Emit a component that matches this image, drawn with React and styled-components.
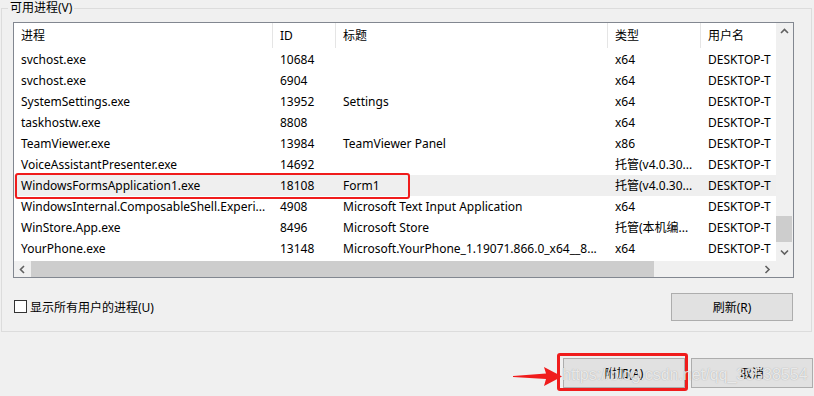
import React from "react";
import styled, { createGlobalStyle } from "styled-components";

const Global = createGlobalStyle`
  html, body { margin: 0; padding: 0; background: #f0f0f0; }
  body {
    font-family: "Noto Sans", "Noto Sans CJK SC", sans-serif;
    font-size: 12px;
    color: #000;
  }
  * { box-sizing: border-box; }
`;

const Page = styled.div`
  width: 814px;
  height: 396px;
  overflow: hidden;
  display: flex;
  flex-direction: column;
`;

const Group = styled.fieldset`
  margin: 0 2px 0 1px;
  border: 1px solid #dcdcdc;
  padding: 6px 17px 10px 11px;
  min-width: 0;
`;

const Legend = styled.legend`
  padding: 0 2px;
  margin-left: -5px;
  font-size: 12px;
  line-height: 16px;
  color: #000;
`;

const List = styled.div`
  border: 1px solid #828790;
  background: #fff;
  display: grid;
  grid-template-columns: 1fr 17px;
  grid-template-rows: 238px 16px;
  height: 256px;
`;

const Viewport = styled.div`
  overflow: hidden;
  position: relative;
`;

const cols = "259px 63px 272px 93px 120px";

const HeaderRow = styled.div`
  display: grid;
  grid-template-columns: ${cols};
  height: 26px;
  background: #fff;
`;

const HeaderCell = styled.div`
  padding-left: 7px;
  line-height: 25px;
  border-left: ${(p) => (p.$first ? "none" : "1px solid #e5e5e5")};
  margin-left: ${(p) => (p.$first ? "0" : "-1px")};
  height: 25px;
  white-space: nowrap;
`;

const Row = styled.div`
  position: relative;
  display: grid;
  grid-template-columns: ${cols};
  height: 21px;
  line-height: 21px;
  background: ${(p) => (p.$selected ? "#efefef" : "#fff")};
`;

const Cell = styled.div`
  padding-left: 7px;
  white-space: nowrap;
  overflow: hidden;
`;

const Highlight = styled.div`
  position: absolute;
  z-index: 2;
  left: 1px;
  top: -2px;
  width: 395px;
  height: 26px;
  border: 2.5px solid #f01c1c;
  border-radius: 3px;
  pointer-events: none;
`;

const VScroll = styled.div`
  background: #f0f0f0;
  display: flex;
  flex-direction: column;
  align-items: center;
  position: relative;
`;

const VThumb = styled.div`
  position: absolute;
  left: 0;
  top: 193px;
  width: 16px;
  height: 26px;
  background: #cdcdcd;
`;

const ArrowBox = styled.div`
  width: 17px;
  height: 17px;
  display: flex;
  align-items: center;
  justify-content: center;
  flex: none;
`;

const VSpacer = styled.div`
  flex: 1;
`;

const HScroll = styled.div`
  background: #f0f0f0;
  display: flex;
  align-items: center;
`;

const HThumb = styled.div`
  width: 623px;
  height: 16px;
  background: #cdcdcd;
`;

const Corner = styled.div`
  background: #f0f0f0;
`;

const OptionsRow = styled.div`
  margin-top: 15px;
  margin-right: 1px;
  display: flex;
  align-items: center;
  justify-content: space-between;
  height: 28px;
`;

const CheckLabel = styled.label`
  display: flex;
  align-items: center;
  gap: 3px;
  margin-left: 1px;
  margin-top: -1px;
`;

const Box = styled.span`
  width: 13px;
  height: 13px;
  border: 1px solid #333;
  background: #fff;
`;

const Button = styled.button`
  position: relative;
  width: 122px;
  height: ${(p) => (p.$tall ? "30px" : "28px")};
  background: #e1e1e1;
  border: 1px solid #adadad;
  font-family: "Noto Sans", "Noto Sans CJK SC", sans-serif;
  font-size: 12px;
  color: #000;
  padding: 0;
`;

const ButtonMark = styled.div`
  position: absolute;
  left: -7px;
  top: -6px;
  right: -4px;
  bottom: -4px;
  border: 3px solid #f01c1c;
  border-radius: 3px;
  pointer-events: none;
`;

const Footer = styled.div`
  position: relative;
  margin-top: 26px;
  display: flex;
  justify-content: flex-end;
  gap: 6px;
  padding-right: 1px;
`;

const Pointer = styled.svg`
  position: absolute;
  left: 513px;
  top: 9px;
`;

const Watermark = styled.div`
  position: absolute;
  left: 562px;
  top: 6px;
  font-family: "Liberation Sans", Arial, sans-serif;
  font-size: 16px;
  line-height: 22px;
  color: rgba(255, 255, 255, 0.75);
  text-shadow: 0 0 1px rgba(110, 110, 110, 0.6);
  pointer-events: none;
  white-space: nowrap;
`;

const Chevron = ({ dir }) => {
  const pts = {
    up: "1,5 4.5,1.5 8,5",
    down: "1,1.5 4.5,5 8,1.5",
    left: "5,1 1.5,4.5 5,8",
    right: "1.5,1 5,4.5 1.5,8",
  }[dir];
  const horiz = dir === "left" || dir === "right";
  return (
    <svg width={horiz ? 7 : 9} height={horiz ? 9 : 7} viewBox={horiz ? "0 0 7 9" : "0 0 9 7"}>
      <polyline points={pts} fill="none" stroke="#606060" strokeWidth="1.6" />
    </svg>
  );
};

const rows = [
  ["svchost.exe", "10684", "", "x64"],
  ["svchost.exe", "6904", "", "x64"],
  ["SystemSettings.exe", "13952", "Settings", "x64"],
  ["taskhostw.exe", "8808", "", "x64"],
  ["TeamViewer.exe", "13984", "TeamViewer Panel", "x86"],
  ["VoiceAssistantPresenter.exe", "14692", "", "托管(v4.0.30..."],
  ["WindowsFormsApplication1.exe", "18108", "Form1", "托管(v4.0.30...", true],
  ["WindowsInternal.ComposableShell.Experi...", "4908", "Microsoft Text Input Application", "x64"],
  ["WinStore.App.exe", "8496", "Microsoft Store", "托管(本机编..."],
  ["YourPhone.exe", "13148", "Microsoft.YourPhone_1.19071.866.0_x64__8...", "x64"],
];

export default function App() {
  return (
    <Page>
      <Global />
      <Group>
        <Legend>可用进程(V)</Legend>
        <List>
          <Viewport>
            <HeaderRow>
              <HeaderCell $first>进程</HeaderCell>
              <HeaderCell>ID</HeaderCell>
              <HeaderCell>标题</HeaderCell>
              <HeaderCell>类型</HeaderCell>
              <HeaderCell>用户名</HeaderCell>
            </HeaderRow>
            {rows.map((r, i) => (
              <Row key={i} $selected={r[4]}>
                <Cell>{r[0]}</Cell>
                <Cell>{r[1]}</Cell>
                <Cell>{r[2]}</Cell>
                <Cell>{r[3]}</Cell>
                <Cell>DESKTOP-T</Cell>
                {r[4] && <Highlight />}
              </Row>
            ))}
          </Viewport>
          <VScroll>
            <ArrowBox>
              <Chevron dir="up" />
            </ArrowBox>
            <VSpacer />
            <VThumb />
            <ArrowBox>
              <Chevron dir="down" />
            </ArrowBox>
          </VScroll>
          <HScroll>
            <ArrowBox>
              <Chevron dir="left" />
            </ArrowBox>
            <HThumb />
            <VSpacer />
            <ArrowBox>
              <Chevron dir="right" />
            </ArrowBox>
          </HScroll>
          <Corner />
        </List>
        <OptionsRow>
          <CheckLabel>
            <Box />
            显示所有用户的进程(U)
          </CheckLabel>
          <Button>刷新(R)</Button>
        </OptionsRow>
      </Group>
      <Footer>
        <Pointer width="50" height="20" viewBox="0 0 50 20">
          <polygon points="0,9 33,6.5 31,0 49,9.5 31,19 33,12 0,10" fill="#f01c1c" />
        </Pointer>
        <Button $tall>
          附加(A)
          <ButtonMark />
        </Button>
        <Button $tall>取消</Button>
        <Watermark>https://blog.csdn.net/qq_33538554</Watermark>
      </Footer>
    </Page>
  );
}
